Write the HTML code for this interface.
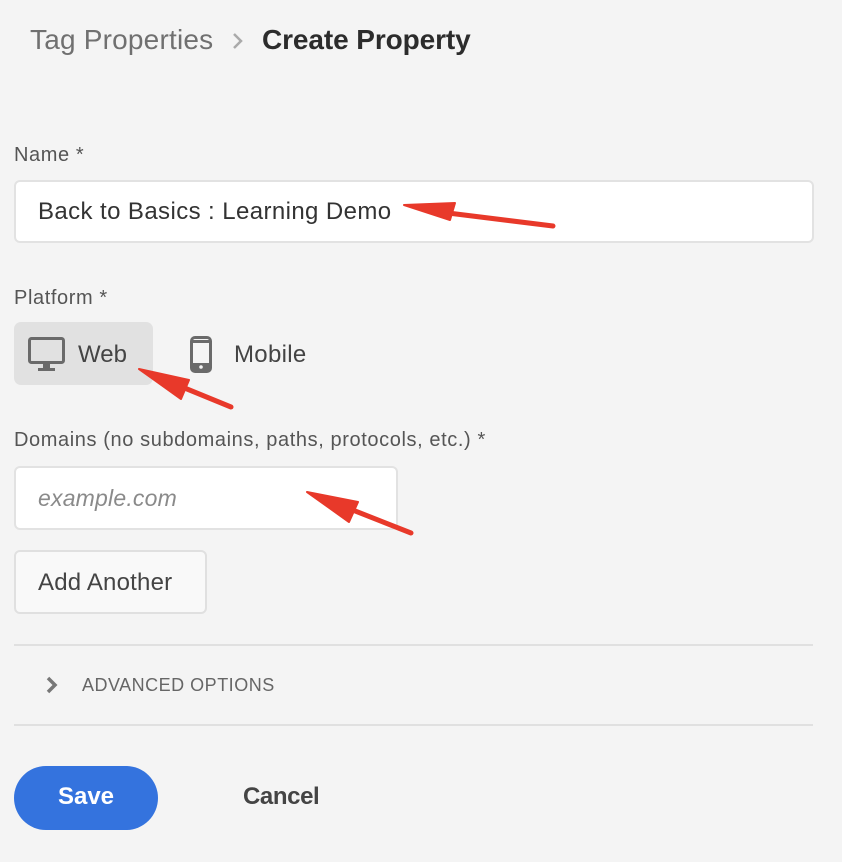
<!DOCTYPE html>
<html><head><meta charset="utf-8"><style>
*{box-sizing:border-box;margin:0;padding:0}
body{width:842px;height:862px;background:#f4f4f4;font-family:"Liberation Sans",sans-serif;position:relative;overflow:hidden}
.a{position:absolute;white-space:nowrap}
.lbl{font-size:20px;color:#555;letter-spacing:0.6px}
.inp{position:absolute;background:#fff;border:2px solid #e2e2e2;border-radius:6px}
.hr{position:absolute;left:14px;width:799px;height:2px;background:#e0e0e0}
</style></head><body>
<div class="a" style="left:30px;top:24px;font-size:28px;color:#707070;letter-spacing:0.2px">Tag Properties</div>
<svg class="a" style="left:232px;top:32px" width="12" height="18" viewBox="0 0 12 18"><path d="M2 2 L9 9 L2 16" fill="none" stroke="#aaa" stroke-width="2.5"/></svg>
<div class="a" style="left:262px;top:24px;font-size:28px;color:#2c2c2c;font-weight:bold;letter-spacing:-0.1px">Create Property</div>

<div class="a lbl" style="left:14px;top:144px">Name *</div>
<div class="inp" style="left:14px;top:180px;width:800px;height:63px"></div>
<div class="a" style="left:38px;top:198px;font-size:24px;color:#333;letter-spacing:0.4px">Back to Basics : Learning Demo</div>

<div class="a lbl" style="left:14px;top:287px">Platform *</div>
<div class="a" style="left:14px;top:322px;width:139px;height:63px;background:#e1e1e1;border-radius:7px"></div>
<svg class="a" style="left:28px;top:337px" width="37" height="36" viewBox="0 0 37 36"><rect x="1.5" y="1.5" width="34" height="24" rx="2" fill="none" stroke="#6a6a6a" stroke-width="3"/><rect x="15" y="26" width="7" height="6" fill="#6a6a6a"/><rect x="10" y="31" width="17" height="3" fill="#6a6a6a"/></svg>
<div class="a" style="left:78px;top:341px;font-size:24px;color:#444">Web</div>
<svg class="a" style="left:190px;top:336px" width="22" height="37" viewBox="0 0 22 37"><rect x="1.5" y="1.5" width="19" height="34" rx="3.5" fill="none" stroke="#6a6a6a" stroke-width="3"/><rect x="1.5" y="4" width="19" height="3" fill="#6a6a6a"/><rect x="1.5" y="27" width="19" height="7" fill="#6a6a6a"/><circle cx="11" cy="31" r="1.8" fill="#f4f4f4"/></svg>
<div class="a" style="left:234px;top:341px;font-size:24px;color:#444;letter-spacing:0.3px">Mobile</div>

<div class="a lbl" style="left:14px;top:429px">Domains (no subdomains, paths, protocols, etc.) *</div>
<div class="inp" style="left:14px;top:466px;width:384px;height:64px"></div>
<div class="a" style="left:38px;top:485px;font-size:23px;color:#8a8a8a;font-style:italic;letter-spacing:0.2px">example.com</div>

<div class="a" style="left:14px;top:550px;width:193px;height:64px;background:#f9f9f9;border:2px solid #e0e0e0;border-radius:6px"></div>
<div class="a" style="left:38px;top:569px;font-size:24px;color:#444;letter-spacing:0.2px">Add Another</div>

<div class="hr" style="top:644px"></div>
<svg class="a" style="left:45px;top:676px" width="14" height="18" viewBox="0 0 14 18"><path d="M3 2 L10 9 L3 16" fill="none" stroke="#777" stroke-width="3.5"/></svg>
<div class="a" style="left:82px;top:675px;font-size:18px;color:#666;letter-spacing:0.5px">ADVANCED OPTIONS</div>
<div class="hr" style="top:724px"></div>

<div class="a" style="left:14px;top:766px;width:144px;height:64px;background:#3473de;border-radius:32px;color:#fff;font-weight:bold;font-size:24px;text-align:center;line-height:62px">Save</div>
<div class="a" style="left:243px;top:783px;font-size:24px;color:#444;font-weight:bold;letter-spacing:-0.4px">Cancel</div>

<svg class="a" style="left:0;top:0" width="842" height="862">
<g fill="#e8392a" stroke="#e8392a" stroke-linecap="round" stroke-linejoin="round">
<line x1="553" y1="226" x2="440" y2="212" stroke-width="5"/>
<polygon points="404,205 455,203 450,220" stroke-width="2"/>
<line x1="231" y1="407" x2="170" y2="382" stroke-width="5"/>
<polygon points="139,369 189,380 181,399" stroke-width="2"/>
<line x1="411" y1="533" x2="340" y2="505" stroke-width="5"/>
<polygon points="307,492 358,502 349,522" stroke-width="2"/>
</g></svg>
</body></html>
